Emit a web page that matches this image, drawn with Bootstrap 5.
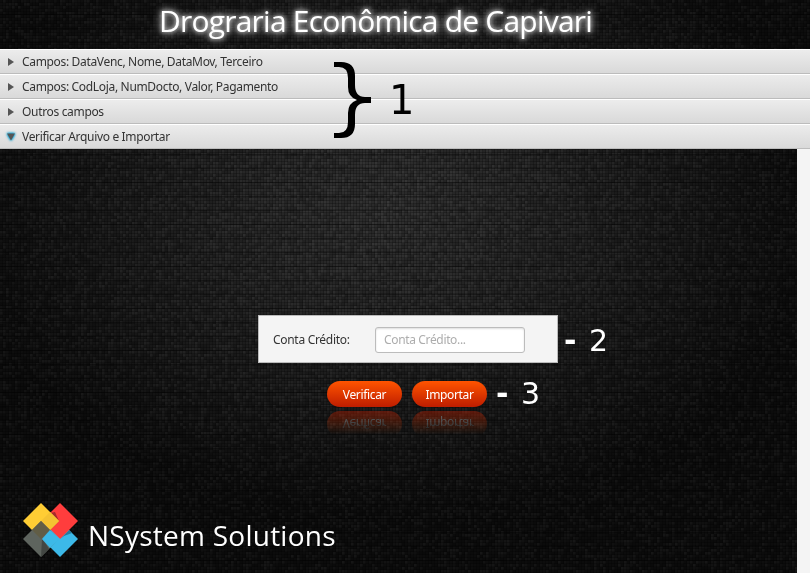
<!DOCTYPE html>
<html lang="pt-BR">
<head>
<meta charset="utf-8">
<title>Drograria Econômica de Capivari</title>
<link href="https://cdn.jsdelivr.net/npm/bootstrap@5.3.0/dist/css/bootstrap.min.css" rel="stylesheet">
<style>
body{width:810px;height:573px;background:#0b0b0b;font:12px/18px "Noto Sans","Open Sans",sans-serif;color:#333}
.app{width:810px;height:573px;isolation:isolate;background:radial-gradient(ellipse 430px 310px at 390px 205px,#303030 0,#282828 30%,#1b1b1b 65%,#0d0d0d 100%)}
.weave{left:0;top:0;z-index:-1}
.title-bar{height:49px}
.title-bar h1{font:30px/40px "Open Sans",sans-serif;letter-spacing:-.78px;color:#fff;text-shadow:0 0 4px #ddd,0 0 8px #aaa,0 0 10px #777;margin:1px 0 0 159px;white-space:nowrap}
.fold{height:25px;border:0;border-top:1px solid #fff;border-bottom:1px solid #bcbcbc;background:linear-gradient(#ececec,#d9d9d9);padding:0 0 0 6px;color:#333;text-align:left;letter-spacing:-.33px}
.fold svg{width:12px;height:12px;margin-right:4px;overflow:visible}
.fold.opened svg{filter:drop-shadow(0 0 1px #039ed3) drop-shadow(0 0 1px #039ed3);margin-left:-1px;margin-right:5px}
.side{width:13px;background:#f4f4f4}
.note{font-family:"DejaVu Sans",sans-serif;white-space:pre;z-index:2}
.n1{left:389px;top:80px;font-size:40px;line-height:40px;color:#000}
.brace{left:333px;top:61px;z-index:2}
.n2,.n3{color:#fff;font-size:30px;line-height:30px;word-spacing:3px}
.n2{left:564px;top:326px}
.n3{left:496px;top:379px}
.panel{width:300px;height:48px;margin:166px 0 0 258px;background:#f4f4f4;border:1px solid #bbb;padding:1px 0 0 14px}
.panel label{width:102px;letter-spacing:-.3px}
.panel input{width:150px;height:26px;border:1px solid #bcbcbc;border-radius:3px;padding:0 8px;font-size:12px;letter-spacing:-.35px;background:#fff;box-shadow:inset 0 1px 2px #ddd}
.panel input::placeholder{color:#adadad;opacity:1}
.actions{margin:18px 0 0 327px;gap:10px}
.pill{width:75px;height:26px;border:0;border-radius:13px;background:linear-gradient(#ff5400,#be1d00);color:#fff;font-size:12px;line-height:27px;letter-spacing:-.35px;padding:0;-webkit-box-reflect:below 4px linear-gradient(transparent 10%,rgba(0,0,0,.42))}
.brand{margin:95px 0 0 22px;color:#fff;font:28px/38px "Open Sans",sans-serif;letter-spacing:.25px}
.brand svg{margin-right:10px}
.brand span{padding-top:10px}
</style>
<script src="https://cdn.jsdelivr.net/npm/bootstrap@5.3.0/dist/js/bootstrap.bundle.min.js"></script>
</head>
<body class="m-0 overflow-hidden">
<main class="app position-relative d-flex flex-column overflow-hidden">
<canvas class="weave position-absolute" width="810" height="573"></canvas>
<header class="title-bar"><h1>Drograria Econômica de Capivari</h1></header>
<nav class="d-flex flex-column">
<button class="fold d-flex align-items-center"><svg viewBox="0 0 12 12"><path d="M2 2v8l6-4z" fill="#555"/></svg>Campos: DataVenc, Nome, DataMov, Terceiro</button>
<button class="fold d-flex align-items-center"><svg viewBox="0 0 12 12"><path d="M2 2v8l6-4z" fill="#555"/></svg>Campos: CodLoja, NumDocto, Valor, Pagamento</button>
<button class="fold d-flex align-items-center"><svg viewBox="0 0 12 12"><path d="M2 2v8l6-4z" fill="#555"/></svg>Outros campos</button>
<button class="fold opened d-flex align-items-center"><svg viewBox="0 0 12 12"><path d="M2 2.500h8l-4 7z" fill="#555"/></svg>Verificar Arquivo e Importar</button>
</nav>
<svg class="brace position-absolute" width="39" height="78" viewBox="0 0 39 78"><path d="M1 1H8Q22 1 22 15V24Q22 36 32 36H38V42H32Q22 42 22 54V63Q22 77 8 77H1V72H6Q15 72 15 61V52Q15 42 24 39Q15 36 15 26V17Q15 6 6 6H1Z"/></svg>
<div class="note n1 position-absolute">1</div>
<div class="d-flex flex-grow-1">
<section class="flex-grow-1">
<div class="panel d-flex align-items-center"><label for="conta">Conta Crédito:</label><input id="conta" placeholder="Conta Crédito..."></div>
<div class="actions d-flex"><button class="pill">Verificar</button><button class="pill">Importar</button></div>
<div class="brand d-flex align-items-center"><svg width="56" height="56" viewBox="0 0 56 56"><path d="M38 19 56 37 38 55 20 37z" fill="#3cb9e8"/><path d="M47 28 50 31 42 34 38 37z" fill="#287b9d"/><path d="M38 1 56 19 38 37 20 19z" fill="#ff3d3d"/><path d="M28 11 33 10 37 19 28 28z" fill="#a52b2b"/><path d="M19 1 37 19 28 28 19 37 1 19z" fill="#ffcd34"/><path d="M28 10 37 19 28 28 19 19z" fill="#f4c232"/><path d="M19 19 37 37 19 55 1 37z" fill="#5e645e"/><path d="M19 19 28 28 19 37 10 28z" fill="#615d46"/><path d="M20 37 24 42 27 47 19 55z" fill="#434743"/><path d="M28 28 38 37 28 46 20 37z" fill="#3cb9e8"/></svg><span>NSystem Solutions</span></div>
</section>
<aside class="side"></aside>
</div>
<div class="note n2 position-absolute"><b>-</b> 2</div>
<div class="note n3 position-absolute"><b>-</b> 3</div>
</main>
<script>
const g=document.querySelector('.weave').getContext('2d');
let seed=7;
const rnd=()=>(seed=(seed*16807)%2147483647)/2147483647;
for(let y=0;y<573;y+=3)for(let x=0;x<810;x+=3){
  const v=rnd();
  g.fillStyle=v<.5?`rgba(0,0,0,${v*.4})`:`rgba(255,255,255,${(v-.5)*.08})`;
  g.fillRect(x,y,3,3);
}
g.fillStyle='rgba(0,0,0,.22)';
for(let x=2;x<810;x+=3)g.fillRect(x,0,1,573);
for(let y=2;y<573;y+=3)g.fillRect(0,y,810,1);
g.fillStyle='rgba(0,0,0,.35)';
for(let y=14;y<573;y+=14)g.fillRect(0,y,810,1);
</script>
</body>
</html>
